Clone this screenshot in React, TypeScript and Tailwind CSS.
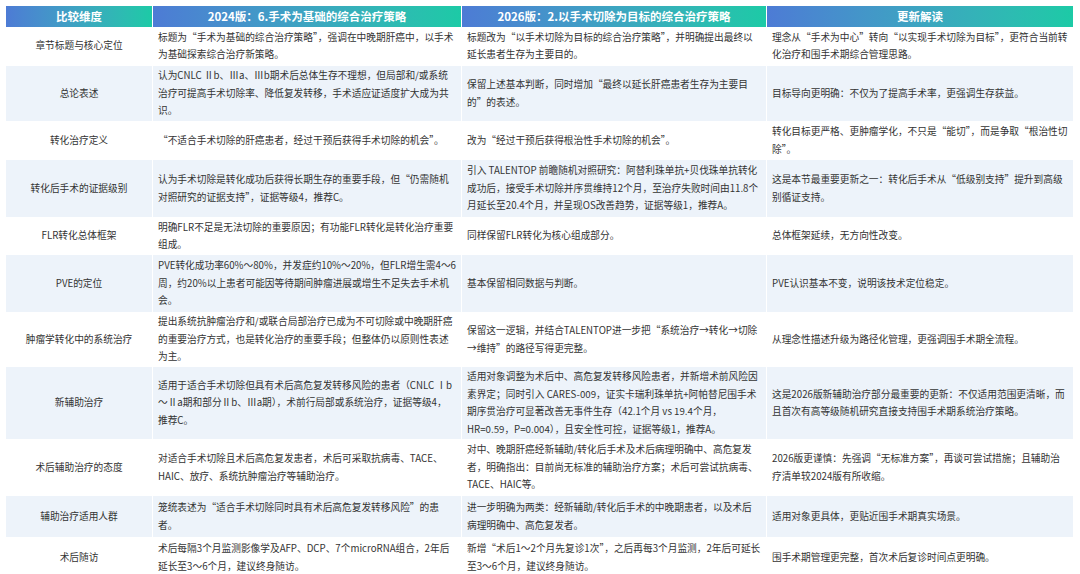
const rows: [string, string, string, string, number][] = [
  ["章节标题与核心定位", "标题为“手术为基础的综合治疗策略”，强调在中晚期肝癌中，以手术为基础探索综合治疗新策略。", "标题改为“以手术切除为目标的综合治疗策略”，并明确提出最终以延长患者生存为主要目的。", "理念从“手术为中心”转向“以实现手术切除为目标”，更符合当前转化治疗和围手术期综合管理思路。", 39],
  ["总论表述", "认为CNLC Ⅱb、Ⅲa、Ⅲb期术后总体生存不理想，但局部和/或系统治疗可提高手术切除率、降低复发转移，手术适应证适度扩大成为共识。", "保留上述基本判断，同时增加“最终以延长肝癌患者生存为主要目的”的表述。", "目标导向更明确：不仅为了提高手术率，更强调生存获益。", 56],
  ["转化治疗定义", "“不适合手术切除的肝癌患者，经过干预后获得手术切除的机会”。", "改为“经过干预后获得根治性手术切除的机会”。", "转化目标更严格、更肿瘤学化，不只是“能切”，而是争取“根治性切除”。", 38],
  ["转化后手术的证据级别", "认为手术切除是转化成功后获得长期生存的重要手段，但“仍需随机对照研究的证据支持”，证据等级4，推荐C。", "引入 TALENTOP 前瞻随机对照研究：阿替利珠单抗+贝伐珠单抗转化成功后，接受手术切除并序贯维持12个月，至治疗失败时间由11.8个月延长至20.4个月，并呈现OS改善趋势，证据等级1，推荐A。", "这是本节最重要更新之一：转化后手术从“低级别支持”提升到高级别循证支持。", 58],
  ["FLR转化总体框架", "明确FLR不足是无法切除的重要原因；有功能FLR转化是转化治疗重要组成。", "同样保留FLR转化为核心组成部分。", "总体框架延续，无方向性改变。", 37],
  ["PVE的定位", "PVE转化成功率60%～80%，并发症约10%～20%，但FLR增生需4～6周，约20%以上患者可能因等待期间肿瘤进展或增生不足失去手术机会。", "基本保留相同数据与判断。", "PVE认识基本不变，说明该技术定位稳定。", 58],
  ["肿瘤学转化中的系统治疗", "提出系统抗肿瘤治疗和/或联合局部治疗已成为不可切除或中晚期肝癌的重要治疗方式，也是转化治疗的重要手段；但整体仍以原则性表述为主。", "保留这一逻辑，并结合TALENTOP进一步把“系统治疗→转化→切除→维持”的路径写得更完整。", "从理念性描述升级为路径化管理，更强调围手术期全流程。", 54],
  ["新辅助治疗", "适用于适合手术切除但具有术后高危复发转移风险的患者（CNLC Ⅰb～Ⅱa期和部分Ⅱb、Ⅲa期），术前行局部或系统治疗，证据等级4，推荐C。", "适用对象调整为术后中、高危复发转移风险患者，并新增术前风险因素界定；同时引入 CARES-009，证实卡瑞利珠单抗+阿帕替尼围手术期序贯治疗可显著改善无事件生存（42.1个月 vs 19.4个月，HR=0.59，P=0.004），且安全性可控，证据等级1，推荐A。", "这是2026版新辅助治疗部分最重要的更新：不仅适用范围更清晰，而且首次有高等级随机研究直接支持围手术期系统治疗策略。", 73],
  ["术后辅助治疗的态度", "对适合手术切除且术后高危复发患者，术后可采取抗病毒、TACE、HAIC、放疗、系统抗肿瘤治疗等辅助治疗。", "对中、晚期肝癌经新辅助/转化后手术及术后病理明确中、高危复发者，明确指出：目前尚无标准的辅助治疗方案；术后可尝试抗病毒、TACE、HAIC等。", "2026版更谨慎：先强调“无标准方案”，再谈可尝试措施；且辅助治疗清单较2024版有所收缩。", 56],
  ["辅助治疗适用人群", "笼统表述为“适合手术切除同时具有术后高危复发转移风险”的患者。", "进一步明确为两类：经新辅助/转化后手术的中晚期患者，以及术后病理明确中、高危复发者。", "适用对象更具体，更贴近围手术期真实场景。", 42],
  ["术后随访", "术后每隔3个月监测影像学及AFP、DCP、7个microRNA组合，2年后延长至3～6个月，建议终身随访。", "新增“术后1～2个月先复诊1次”，之后再每3个月监测，2年后可延长至3～6个月，建议终身随访。", "围手术期管理更完整，首次术后复诊时间点更明确。", 40],
];

const headers = ["比较维度", "2024版：6.手术为基础的综合治疗策略", "2026版：2.以手术切除为目标的综合治疗策略", "更新解读"];

export default function App() {
  return (
    <div className="w-[1080px] h-[574px] bg-white overflow-hidden px-[6px] pt-[6px] text-[#333]" style={{ fontFamily: '"Noto Sans CJK SC", "Noto Sans", sans-serif' }}>
      <div className="grid grid-cols-[147px_309px_305px_307px]">
        {headers.map((h, i) => (
          <div key={i} className="h-[21px] flex items-center justify-center text-white font-bold text-[11.5px] bg-gradient-to-r from-[#4d7bd5] to-[#1ccaa6] border-r border-white">
            {h}
          </div>
        ))}
        {rows.map((r, ri) => {
          const bg = ri % 2 === 1 ? "bg-[#edf3fa]" : "bg-white";
          return [0, 1, 2, 3].map((ci) => (
            <div
              key={ri + "-" + ci}
              style={{ height: r[4] }}
              className={`${bg} flex items-center text-[9.7px] leading-[17.5px] border-r border-b border-white overflow-hidden ${ci === 0 ? "justify-center text-center" : "px-[5px]"}`}
            >
              <div>{r[ci] as string}</div>
            </div>
          ));
        })}
      </div>
    </div>
  );
}
